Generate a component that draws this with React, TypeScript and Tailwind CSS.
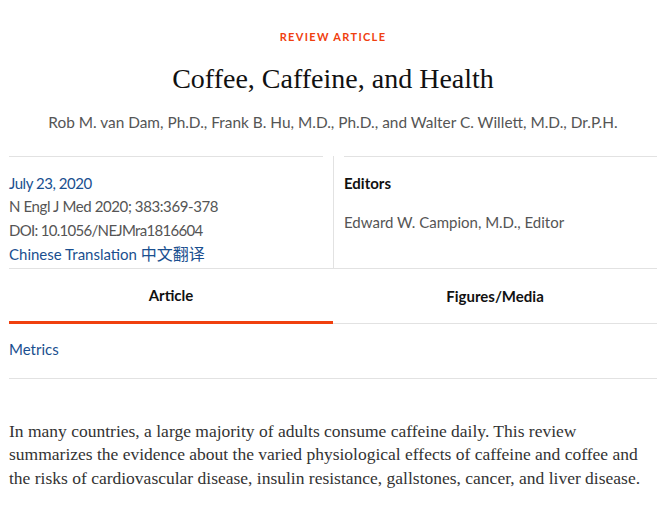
import React, { useState } from "react";

const sans = "font-['Lato','Open_Sans',sans-serif]";
const serif = "font-['Liberation_Serif','Times_New_Roman',serif]";

const App: React.FC = () => {
  const [tab, setTab] = useState("article");

  return (
    <div className="w-[666px] min-h-[508px] bg-white px-[9px] pt-[29px]">
      <p className={`${sans} text-center text-[11px] font-bold tracking-[0.12em] text-[#f0400f]`}>
        REVIEW ARTICLE
      </p>
      <h1 className={`${serif} mt-[16px] text-center text-[28px] leading-[34px] text-[#111]`}>
        Coffee, Caffeine, and Health
      </h1>
      <p className={`${sans} mt-[15px] text-center text-[15.4px] text-[#555]`}>
        Rob M. van Dam, Ph.D., Frank B. Hu, M.D., Ph.D., and Walter C. Willett, M.D., Dr.P.H.
      </p>

      <div className={`${sans} mt-[22px] grid grid-cols-2 border-b border-[#e2e2e2] text-[15px]`}>
        <div className="pr-[10px]">
          <div className="border-t border-[#e2e2e2] pt-[15px] pb-[1px] leading-[23.5px]">
            <p className="tracking-[-0.45px] text-[#1a4f8f]">July 23, 2020</p>
            <p className="tracking-[-0.4px] text-[#555]">N Engl J Med 2020; 383:369-378</p>
            <p className="tracking-[-0.7px] text-[#555]">DOI: 10.1056/NEJMra1816604</p>
            <p className="text-[#1a4f8f]">
              Chinese Translation{" "}
              <span className="font-['Noto_Sans_CJK_SC',sans-serif] text-[16px]">中文翻译</span>
            </p>
          </div>
        </div>
        <div className="border-l border-[#e2e2e2] pl-[10px]">
          <div className="border-t border-[#e2e2e2] pt-[15px]">
            <p className="font-bold leading-[23.5px] text-[#111]">Editors</p>
            <p className="mt-[15.5px] leading-[23.5px] text-[#555]">Edward W. Campion, M.D., Editor</p>
          </div>
        </div>
      </div>

      <div className={`${sans} grid grid-cols-2 text-[15px] font-bold text-[#111]`}>
        <button
          onClick={() => setTab("article")}
          className={`h-[55px] pt-[2px] ${tab === "article" ? "border-b-[3px] border-[#f0400f]" : "border-b border-[#e2e2e2]"}`}
        >
          Article
        </button>
        <button
          onClick={() => setTab("figures")}
          className={`h-[55px] pt-[2px] ${tab === "figures" ? "border-b-[3px] border-[#f0400f]" : "border-b border-[#e2e2e2]"}`}
        >
          Figures/Media
        </button>
      </div>

      <div className={`${sans} flex h-[55px] items-center border-b border-[#e2e2e2] pb-[2px] text-[15px] text-[#1a4f8f]`}>
        Metrics
      </div>

      <p className={`${serif} mt-[41px] text-[17.5px] leading-[23.5px] text-[#333]`}>
        In many countries, a large majority of adults consume caffeine daily. This review summarizes the
        evidence about the varied physiological effects of caffeine and coffee and the risks of
        cardiovascular disease, insulin resistance, gallstones, cancer, and liver disease.
      </p>
    </div>
  );
};

export default App;
